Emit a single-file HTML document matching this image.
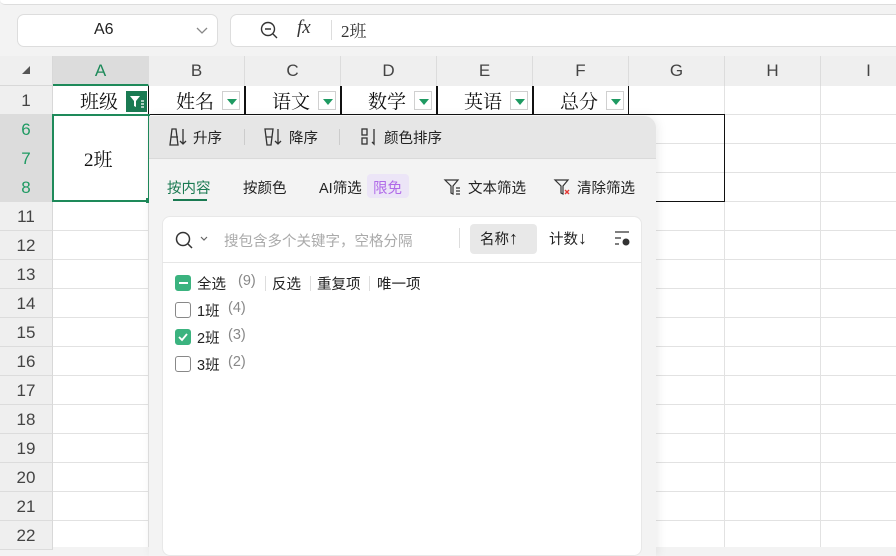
<!DOCTYPE html>
<html><head><meta charset="utf-8"><style>
*{margin:0;padding:0;box-sizing:border-box}
body{width:896px;height:547px;overflow:hidden;background:#f3f3f3;position:relative;font-family:"Liberation Sans","Noto Sans CJK SC",sans-serif;color:#222}
.a{position:absolute}
.ch{position:absolute;top:56px;height:30px;border-right:1px solid #dcdcdc;text-align:center;line-height:30px;font-size:17px;color:#444;background:#efefef}
.rh{position:absolute;left:0;width:53px;height:29px;border-bottom:1px solid #dcdcdc;text-align:center;line-height:29px;font-size:17px;color:#444;background:#efefef;border-right:1px solid #d8d8d8}
.hl{position:absolute;left:53px;right:0;height:1px;background:#e2e2e2}
.vl{position:absolute;top:86px;bottom:0;width:1px;background:#e2e2e2}
.hc{position:absolute;top:86px;height:29px;font-family:"Noto Serif CJK SC","Liberation Serif",serif;font-size:19px;line-height:29px;color:#111}
.dd{position:absolute;top:91px;width:18px;height:19px;background:#fff;border:1px solid #d0d0d0}
.dd:after{content:"";position:absolute;left:4px;top:7px;border-left:5px solid transparent;border-right:5px solid transparent;border-top:6px solid #1e9a62}
.t{position:absolute;font-size:14.5px;white-space:nowrap;margin-top:-2px}
.cb{position:absolute;left:175px;width:16px;height:16px;border:1.5px solid #888;border-radius:3px;background:#fff}
</style></head><body>
<div class="a" style="left:0;top:0;width:896px;height:5px;background:#fff;border-bottom:1px solid #ddd;border-radius:0 0 0 8px"></div>
<div class="a" style="left:17px;top:14px;width:201px;height:33px;background:#fff;border:1px solid #ddd;border-radius:7px"></div>
<div class="t" style="left:94px;top:23px;font-size:16px">A6</div>
<svg class="a" style="left:196px;top:27px" width="12" height="8"><path d="M1 1l5 5 5-5" fill="none" stroke="#888" stroke-width="1.3"/></svg>
<div class="a" style="left:230px;top:14px;width:680px;height:33px;background:#fff;border:1px solid #ddd;border-radius:7px"></div>
<svg class="a" style="left:259px;top:20px" width="20" height="20"><circle cx="9" cy="9" r="6.5" fill="none" stroke="#333" stroke-width="1.4"/><path d="M6 9h6M14 14l4 4" stroke="#333" stroke-width="1.4"/></svg>
<div class="t" style="left:297px;top:19px;font-family:'Liberation Serif',serif;font-style:italic;font-size:19px;color:#333">fx</div>
<div class="a" style="left:331px;top:20px;width:1px;height:20px;background:#ddd"></div>
<div class="t" style="left:341px;top:19px;font-family:'Liberation Serif','Noto Serif CJK SC',serif;font-size:17px;color:#333">2班</div>

<div class="a" style="left:0;top:56px;width:53px;height:30px;background:#efefef;border-right:1px solid #d8d8d8;border-bottom:1px solid #d8d8d8"></div>
<div class="a" style="left:22px;top:66px;border-left:8px solid transparent;border-bottom:8px solid #555"></div>
<div class="ch" style="left:53px;width:96px;background:#dcdcdc;color:#1e8a5a;border-bottom:2px solid #1e8a5a">A</div>
<div class="ch" style="left:149px;width:96px">B</div>
<div class="ch" style="left:245px;width:96px">C</div>
<div class="ch" style="left:341px;width:96px">D</div>
<div class="ch" style="left:437px;width:96px">E</div>
<div class="ch" style="left:533px;width:96px">F</div>
<div class="ch" style="left:629px;width:96px">G</div>
<div class="ch" style="left:725px;width:96px">H</div>
<div class="ch" style="left:821px;width:96px">I</div>

<div class="a" style="left:53px;top:86px;right:0;bottom:0;background:#fff"></div>
<div class="hl" style="top:114px"></div><div class="hl" style="top:143px"></div><div class="hl" style="top:172px"></div><div class="hl" style="top:201px"></div><div class="hl" style="top:230px"></div><div class="hl" style="top:259px"></div><div class="hl" style="top:288px"></div><div class="hl" style="top:317px"></div><div class="hl" style="top:346px"></div><div class="hl" style="top:375px"></div><div class="hl" style="top:404px"></div><div class="hl" style="top:433px"></div><div class="hl" style="top:462px"></div><div class="hl" style="top:491px"></div><div class="hl" style="top:520px"></div>
<div class="vl" style="left:148px"></div><div class="vl" style="left:724px"></div><div class="vl" style="left:820px"></div>

<div class="rh" style="top:86px">1</div>
<div class="rh" style="top:115px;color:#1e9a62;background:#dcdcdc;border-bottom:none">6</div>
<div class="rh" style="top:144px;color:#1e9a62;background:#dcdcdc;border-bottom:none">7</div>
<div class="rh" style="top:173px;color:#1e9a62;background:#dcdcdc">8</div>
<div class="rh" style="top:202px">11</div><div class="rh" style="top:231px">12</div><div class="rh" style="top:260px">13</div><div class="rh" style="top:289px">14</div><div class="rh" style="top:318px">15</div><div class="rh" style="top:347px">16</div><div class="rh" style="top:376px">17</div><div class="rh" style="top:405px">18</div><div class="rh" style="top:434px">19</div><div class="rh" style="top:463px">20</div><div class="rh" style="top:492px">21</div><div class="rh" style="top:521px">22</div>

<div class="a" style="left:148px;top:86px;width:481px;height:29px;border-left:1.5px solid #111;border-right:1.5px solid #111;border-bottom:1.5px solid #111"></div>
<div class="a" style="left:244px;top:86px;width:1.5px;height:29px;background:#111"></div>
<div class="a" style="left:340px;top:86px;width:1.5px;height:29px;background:#111"></div>
<div class="a" style="left:436px;top:86px;width:1.5px;height:29px;background:#111"></div>
<div class="a" style="left:532px;top:86px;width:1.5px;height:29px;background:#111"></div>
<div class="a" style="left:148px;top:114px;width:577px;height:88px;border-right:1.5px solid #111;border-bottom:1.5px solid #111;border-top:1.5px solid #111"></div>

<div class="hc" style="left:80px">班级</div>
<div class="a" style="left:126px;top:91px;width:21px;height:21px;background:#1a7a52"></div>
<svg class="a" style="left:128px;top:93px" width="18" height="17"><path d="M2 3h10l-4 5v6l-2-1V8z" fill="#fff"/><path d="M13 8h3M13 11h3M13 14h3" stroke="#fff" stroke-width="1.2"/></svg>
<div class="hc" style="left:176px">姓名</div><div class="dd" style="left:222px"></div>
<div class="hc" style="left:272px">语文</div><div class="dd" style="left:318px"></div>
<div class="hc" style="left:368px">数学</div><div class="dd" style="left:414px"></div>
<div class="hc" style="left:464px">英语</div><div class="dd" style="left:510px"></div>
<div class="hc" style="left:560px">总分</div><div class="dd" style="left:606px"></div>

<div class="a" style="left:52px;top:114px;width:98px;height:88px;border:2.5px solid #1e8a5a;background:#fff"></div>
<div class="a" style="left:146px;top:198px;width:5px;height:5px;background:#1e8a5a"></div>
<div class="t" style="left:84px;top:145px;font-family:'Liberation Serif','Noto Serif CJK SC',serif;font-size:19px;color:#111;margin-top:0">2班</div>

<div class="a" style="left:149px;top:116px;width:507px;height:440px;background:#f3f3f3;border-radius:0 12px 0 0;box-shadow:2px 0 10px rgba(0,0,0,.08)"></div>
<div class="a" style="left:149px;top:116px;width:507px;height:43px;background:#e6e6e6;border-radius:0 12px 0 0;border-bottom:1px solid #dadada"></div>
<svg class="a" style="left:168px;top:127px" width="22" height="20"><path d="M4 2h4l2 16H2z" fill="none" stroke="#333" stroke-width="1.3"/><path d="M3 10h7M15 2v15M12 14l3 3 3-3" fill="none" stroke="#333" stroke-width="1.3"/></svg>
<div class="t" style="left:193px;top:129px">升序</div>
<div class="a" style="left:244px;top:129px;width:1px;height:16px;background:#ccc"></div>
<svg class="a" style="left:263px;top:127px" width="22" height="20"><path d="M2 2h8l-2 16H4z" fill="none" stroke="#333" stroke-width="1.3"/><path d="M3 10h6M15 2v15M12 14l3 3 3-3" fill="none" stroke="#333" stroke-width="1.3"/></svg>
<div class="t" style="left:289px;top:129px">降序</div>
<div class="a" style="left:339px;top:129px;width:1px;height:16px;background:#ccc"></div>
<svg class="a" style="left:361px;top:127px" width="18" height="20"><rect x="1" y="2" width="5" height="6" fill="none" stroke="#333" stroke-width="1.3"/><rect x="1" y="11" width="5" height="6" fill="none" stroke="#333" stroke-width="1.3"/><path d="M13 2v15l-2-2" fill="none" stroke="#333" stroke-width="1.3"/></svg>
<div class="t" style="left:384px;top:129px">颜色排序</div>

<div class="t" style="left:167px;top:179px;color:#1a7a52">按内容</div>
<div class="a" style="left:173px;top:199px;width:34px;height:2px;background:#1a7a52"></div>
<div class="t" style="left:243px;top:179px">按颜色</div>
<div class="t" style="left:319px;top:179px">AI筛选</div>
<div class="a" style="left:367px;top:174px;width:42px;height:24px;background:#ece5f7;border-radius:4px"></div>
<div class="t" style="left:373px;top:179px;color:#b06ae8">限免</div>
<svg class="a" style="left:443px;top:177px" width="20" height="20"><path d="M2 3h13l-5 6v8l-2-1V9z" fill="none" stroke="#333" stroke-width="1.2"/><path d="M13 11h4M13 14h4M13 17h4" stroke="#333" stroke-width="1.2"/></svg>
<div class="t" style="left:468px;top:179px">文本筛选</div>
<svg class="a" style="left:553px;top:177px" width="20" height="20"><path d="M2 3h13l-5 6v8l-2-1V9z" fill="none" stroke="#333" stroke-width="1.2"/><path d="M12 13l4 4M16 13l-4 4" stroke="#e53935" stroke-width="1.4"/></svg>
<div class="t" style="left:577px;top:179px">清除筛选</div>

<div class="a" style="left:162px;top:216px;width:480px;height:340px;background:#fff;border-radius:8px;border:1px solid #e8e8e8"></div>
<div class="a" style="left:162px;top:262px;width:480px;height:1px;background:#e6e6e6"></div>
<svg class="a" style="left:174px;top:230px" width="36" height="20"><circle cx="9" cy="9" r="6.5" fill="none" stroke="#333" stroke-width="1.5"/><path d="M14 14l4 4" stroke="#333" stroke-width="1.5"/><path d="M27 7l3 3 3-3" fill="none" stroke="#666" stroke-width="1.2"/></svg>
<div class="t" style="left:224px;top:232px;color:#aaa">搜包含多个关键字，空格分隔</div>
<div class="a" style="left:459px;top:228px;width:1px;height:20px;background:#ddd"></div>
<div class="a" style="left:470px;top:224px;width:67px;height:30px;background:#e8e8e8;border-radius:4px"></div>
<div class="t" style="left:480px;top:230px">名称<span style="font-size:18px">↑</span></div>
<div class="t" style="left:549px;top:230px">计数<span style="font-size:18px">↓</span></div>
<svg class="a" style="left:614px;top:230px" width="18" height="18"><path d="M1 2h14M1 8h6M1 14h4" stroke="#333" stroke-width="1.3"/><circle cx="12" cy="12" r="3.5" fill="#333"/></svg>

<div class="cb" style="top:275px;background:#3bb37f;border-color:#3bb37f"></div>
<div class="a" style="left:179px;top:282px;width:9px;height:2px;background:#fff"></div>
<div class="t" style="left:197px;top:275px">全选</div>
<div class="t" style="left:238px;top:275px;color:#888">(9)</div>
<div class="a" style="left:265px;top:276px;width:1px;height:15px;background:#ddd"></div>
<div class="t" style="left:272px;top:275px">反选</div>
<div class="a" style="left:310px;top:276px;width:1px;height:15px;background:#ddd"></div>
<div class="t" style="left:317px;top:275px">重复项</div>
<div class="a" style="left:369px;top:276px;width:1px;height:15px;background:#ddd"></div>
<div class="t" style="left:377px;top:275px">唯一项</div>
<div class="cb" style="top:302px"></div>
<div class="t" style="left:197px;top:302px">1班</div><div class="t" style="left:228px;top:302px;color:#888">(4)</div>
<div class="cb" style="top:329px;background:#3bb37f;border-color:#3bb37f"></div>
<svg class="a" style="left:175px;top:329px" width="16" height="16"><path d="M4 8l3 3 5-6" fill="none" stroke="#fff" stroke-width="1.8"/></svg>
<div class="t" style="left:197px;top:329px">2班</div><div class="t" style="left:228px;top:329px;color:#888">(3)</div>
<div class="cb" style="top:356px"></div>
<div class="t" style="left:197px;top:356px">3班</div><div class="t" style="left:228px;top:356px;color:#888">(2)</div>
</body></html>
